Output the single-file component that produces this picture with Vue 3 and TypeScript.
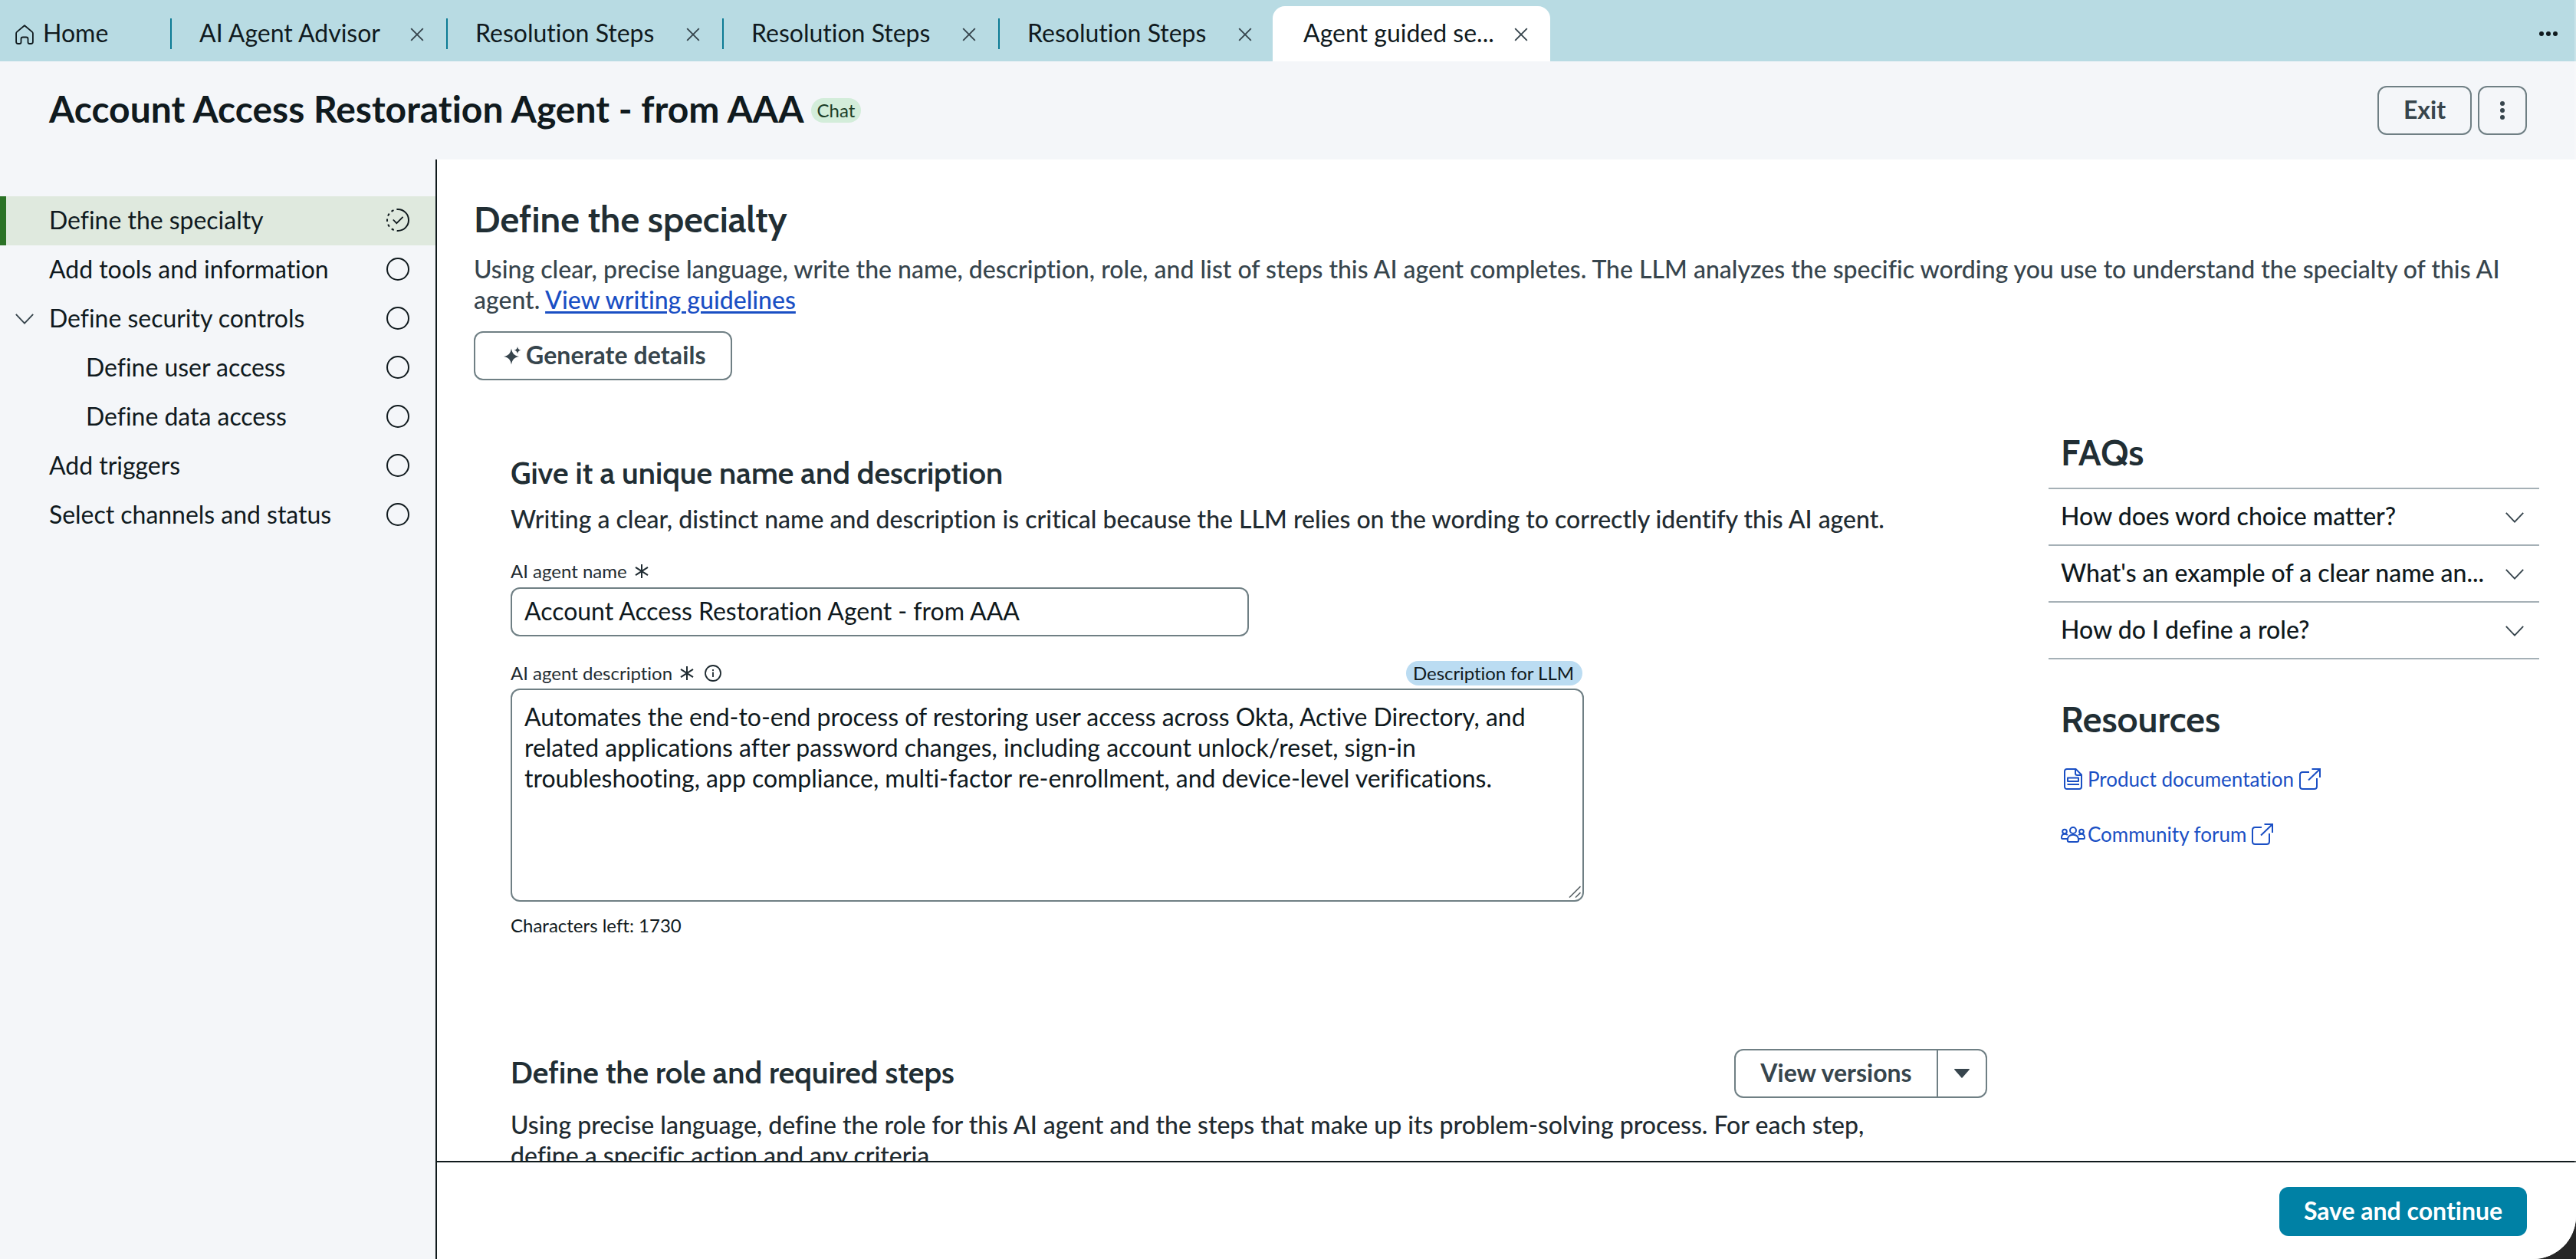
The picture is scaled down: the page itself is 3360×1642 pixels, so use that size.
<script setup lang="ts">
interface Tab { label: string; active?: boolean }
interface Step { label: string; nested?: boolean; expandable?: boolean; active?: boolean }

const tabs: Tab[] = [
  { label: 'AI Agent Advisor' },
  { label: 'Resolution Steps' },
  { label: 'Resolution Steps' },
  { label: 'Resolution Steps' },
  { label: 'Agent guided se...', active: true },
]

const steps: Step[] = [
  { label: 'Define the specialty', active: true },
  { label: 'Add tools and information' },
  { label: 'Define security controls', expandable: true },
  { label: 'Define user access', nested: true },
  { label: 'Define data access', nested: true },
  { label: 'Add triggers' },
  { label: 'Select channels and status' },
]

const faqs: string[] = [
  'How does word choice matter?',
  "What's an example of a clear name an...",
  'How do I define a role?',
]
</script>

<template>
  <div class="backdrop">
    <div class="app">
      <nav class="tabbar">
        <div class="home">
          <svg width="24" height="26" viewBox="0 0 24 26" fill="none" stroke="#101a1e" stroke-width="1.8" stroke-linejoin="round">
            <path d="M12 1.2 22 9.6c.6.5.9 1.2.9 1.9V22.5c0 1.5-1 2.5-2.4 2.5h-2c-1.2 0-2-.9-2-2V18.8c0-1.4-1.2-2.3-2.5-2.3h-4c-1.3 0-2.5.9-2.5 2.3V23c0 1.1-.8 2-2 2h-2C2.1 25 1.1 24 1.1 22.5V11.5c0-.7.3-1.400.9-1.900Z" />
          </svg>
          <span class="txt">Home</span>
        </div>
        <div v-for="(tab, i) in tabs" :key="i" class="tab" :class="{ active: tab.active }">
          <span class="txt">{{ tab.label }}</span>
          <svg class="close" width="18" height="18" viewBox="0 0 18 18" fill="none" stroke="#37454d" stroke-width="1.9">
            <path d="M1.2 1.2 16.8 16.8M16.8 1.2 1.2 16.8" />
          </svg>
        </div>
        <svg class="more" width="24" height="6" viewBox="0 0 24 6" fill="#101a1e">
          <circle cx="3" cy="3" r="3" /><circle cx="12" cy="3" r="3" /><circle cx="21" cy="3" r="3" />
        </svg>
      </nav>

      <header class="header">
        <h1>Account Access Restoration Agent - from AAA</h1>
        <span class="chat">Chat</span>
        <div class="header-actions">
          <button class="btn exit" type="button"><span class="txt">Exit</span></button>
          <button class="btn kebab" type="button" aria-label="More actions">
            <svg width="6" height="24" viewBox="0 0 6 24" fill="#37454d">
              <circle cx="3" cy="3" r="3" /><circle cx="3" cy="12" r="3" /><circle cx="3" cy="21" r="3" />
            </svg>
          </button>
        </div>
      </header>

      <div class="body">
        <aside class="sidebar">
          <div v-for="step in steps" :key="step.label" class="step" :class="{ active: step.active, nested: step.nested }">
            <span class="toggle">
              <svg v-if="step.expandable" width="24" height="14" viewBox="0 0 24 14" fill="none" stroke="#37454d" stroke-width="1.9">
                <path d="M.8.8 12 12.6 23.2.8" />
              </svg>
            </span>
            <span class="txt step-label">{{ step.label }}</span>
            <svg v-if="step.active" class="status" width="30" height="30" viewBox="0 0 30 30" fill="none" stroke="#101a1e" stroke-width="2">
              <path d="M15 1a14 14 0 0 1 0 28" />
              <path d="M15 1a14 14 0 0 0 0 28" stroke-dasharray="3.4 3.93" stroke-dashoffset="1.7" />
              <path d="M8.8 14.5 13.3 19.2 21.6 10.8" stroke-width="1.8" />
            </svg>
            <svg v-else class="status" width="30" height="30" viewBox="0 0 30 30" fill="none" stroke="#101a1e" stroke-width="2">
              <circle cx="15" cy="15" r="14" />
            </svg>
          </div>
        </aside>

        <div class="main">
          <div class="scroll">
            <h2 class="title">Define the specialty</h2>
            <p class="intro">Using clear, precise language, write the name, description, role, and list of steps this AI agent completes. The LLM analyzes the specific wording you use to understand the specialty of this AI agent. <a>View writing guidelines</a></p>
            <button class="btn generate" type="button">
              <svg width="23" height="24" viewBox="0 0 23 24" fill="#37454d">
                <path d="M10 2.5C11.2 9 13.5 11.8 20 13 13.5 14.2 11.2 17 10 23.5 8.8 17 6.5 14.2 0 13 6.5 11.8 8.8 9 10 2.5Z" />
                <path d="M18 0c.6 3 1.6 4.2 4.5 4.8C19.6 5.4 18.6 6.6 18 9.6 17.4 6.6 16.4 5.4 13.5 4.8 16.4 4.2 17.4 3 18 0Z" />
              </svg>
              <span class="txt">Generate details</span>
            </button>

            <div class="columns">
              <section class="form">
                <h3>Give it a unique name and description</h3>
                <p class="lead name-lead">Writing a clear, distinct name and description is critical because the LLM relies on the wording to correctly identify this AI agent.</p>

                <div class="label name-label">
                  <span>AI agent name</span>
                  <svg width="18" height="18" viewBox="0 0 18 18" stroke="#1f2b31" stroke-width="2"><path d="M9 0V18M1 3.8 17 14.2M17 3.8 1 14.2" /></svg>
                </div>
                <div class="field input"><span class="txt">Account Access Restoration Agent - from AAA</span></div>

                <div class="label desc-label">
                  <span>AI agent description</span>
                  <svg width="18" height="18" viewBox="0 0 18 18" stroke="#1f2b31" stroke-width="2"><path d="M9 0V18M1 3.8 17 14.2M17 3.8 1 14.2" /></svg>
                  <svg class="info" width="22" height="22" viewBox="0 0 22 22" fill="none" stroke="#1f2b31" stroke-width="1.8">
                    <circle cx="11" cy="11" r="10" /><path d="M11 9.5V16M11 6V8" />
                  </svg>
                  <span class="badge">Description for LLM</span>
                </div>
                <div class="field textarea">
                  Automates the end-to-end process of restoring user access across Okta, Active Directory, and related applications after password changes, including account unlock/reset, sign-in troubleshooting, app compliance, multi-factor re-enrollment, and device-level verifications.
                  <svg class="grip" width="16" height="16" viewBox="0 0 16 16" stroke="#5c6468" stroke-width="1.6"><path d="M1 15.5 15.5 1M9 15.5 15.5 9" /></svg>
                </div>
                <div class="chars">Characters left: 1730</div>

                <div class="role-head">
                  <h3>Define the role and required steps</h3>
                  <div class="split">
                    <button type="button" class="split-main"><span class="txt">View versions</span></button>
                    <button type="button" class="split-caret" aria-label="Version options">
                      <svg width="20" height="12" viewBox="0 0 20 12" fill="#37454d"><path d="M.6 0H19.4c.5 0 .8.6.4 1L10.6 11.5c-.3.4-.9.4-1.2 0L.2 1C-.2.6.1 0 .6 0Z" /></svg>
                    </button>
                  </div>
                </div>
                <p class="lead role-lead">Using precise language, define the role for this AI agent and the steps that make up its problem-solving process. For each step, define a specific action and any criteria.</p>
              </section>

              <section class="help">
                <h2>FAQs</h2>
                <div class="faqs">
                  <div v-for="faq in faqs" :key="faq" class="faq">
                    <span class="txt">{{ faq }}</span>
                    <svg width="24" height="14" viewBox="0 0 24 14" fill="none" stroke="#37454d" stroke-width="1.9"><path d="M.8.8 12 12.6 23.2.8" /></svg>
                  </div>
                </div>
                <h2 class="resources">Resources</h2>
                <a class="link">
                  <svg class="doc" width="24" height="28" viewBox="0 0 24 28" fill="none" stroke="#1a4fc4" stroke-width="2" stroke-linejoin="round">
                    <path d="M4 1H15.5L23 8.5V24c0 1.8-1.2 3-3 3H4c-1.8 0-3-1.2-3-3V4c0-1.8 1.2-3 3-3Z" />
                    <path d="M15 1V6.5c0 1.5 1 2.5 2.5 2.5H23" />
                    <path d="M5 12.5H19V17H5ZM4.500 21H20" />
                  </svg>
                  <span>Product documentation</span>
                  <svg width="28" height="28" viewBox="0 0 28 28" fill="none" stroke="#1a4fc4" stroke-width="2">
                    <path d="M13 5H4.5C2.3 5 1 6.3 1 8.5V23.5C1 25.7 2.3 27 4.5 27H19.5C21.7 27 23 25.7 23 23.5V13M12 15.500 26.500 1.500M16.500 1H27V12" />
                  </svg>
                </a>
                <a class="link">
                  <svg class="people" width="32" height="21" viewBox="0 0 32 21" fill="none" stroke="#1a4fc4" stroke-width="2">
                    <circle cx="16" cy="5" r="4" /><circle cx="5" cy="6.5" r="2.8" /><circle cx="27" cy="6.5" r="2.8" />
                    <path d="M11 20C9.6 20 8.8 19.3 8.8 18 8.8 13.2 11 10.8 16 10.8S23.2 13.2 23.2 18C23.2 19.3 22.4 20 21 20ZM8.5 16H2.5C1.5 16 1 15.5 1 14.5 1 11.2 2.3 9.8 5 9.8 6.8 9.8 8 10.2 8.9 11.2M23.5 16H29.5C30.5 16 31 15.5 31 14.5 31 11.2 29.7 9.8 27 9.8 25.2 9.8 24 10.2 23.1 11.2" />
                  </svg>
                  <span>Community forum</span>
                  <svg width="28" height="28" viewBox="0 0 28 28" fill="none" stroke="#1a4fc4" stroke-width="2">
                    <path d="M13 5H4.5C2.3 5 1 6.3 1 8.5V23.5C1 25.7 2.3 27 4.5 27H19.5C21.7 27 23 25.7 23 23.5V13M12 15.500 26.500 1.500M16.500 1H27V12" />
                  </svg>
                </a>
              </section>
            </div>
          </div>

          <footer class="footer">
            <button class="save" type="button"><span class="txt">Save and continue</span></button>
          </footer>
        </div>
      </div>
    </div>
  </div>
</template>

<style>
html, body { margin: 0; background: #262626; }
</style>

<style scoped>
.backdrop { width: 3360px; height: 1642px; background: #262626; overflow: hidden; }
.app {
  position: relative; width: 3360px; height: 1642px; display: flex; flex-direction: column; overflow: hidden;
  background: #fff; border-bottom-right-radius: 56px; box-sizing: border-box;
  font-family: Lato, "Open Sans", sans-serif; font-size: 32px; line-height: 40px; color: #101a1e;
  font-variant-ligatures: none;
}
/* thin highlight along the window's right edge */
.app::after { content: ""; position: absolute; top: 0; right: 0; bottom: 0; width: 2px; background: rgba(255, 255, 255, 0.25); }
h1, h2, h3, p { margin: 0; }
button { font: inherit; font-variant-ligatures: none; padding: 0; margin: 0; background: none; cursor: pointer; box-sizing: border-box; }
svg { display: block; flex: none; }
.txt { display: block; line-height: 40px; padding-bottom: 2px; white-space: nowrap; }

.tabbar { flex: none; height: 80px; box-sizing: border-box; padding: 8px 24px 0 0; background: #b8dbe3; display: flex; }
.home { width: 222px; box-sizing: border-box; padding-left: 20px; display: flex; align-items: center; gap: 12px; flex: none; }
.home svg, .close { margin-top: 2px; }
.tab { position: relative; width: 360px; box-sizing: border-box; padding: 0 29px 0 38px; display: flex; align-items: center; justify-content: space-between; flex: none; }
.tab::before { content: ""; position: absolute; left: 0; top: 16px; width: 2px; height: 40px; background: #0b7a94; }
.tab.active { background: #fff; border-radius: 16px 16px 0 0; margin-left: -2px; width: 362px; padding: 0 29px 0 40px; }
.tab.active::before { display: none; }
.more { margin: 33px 0 0 auto; }

.header { flex: none; height: 128px; background: #f4f6f9; display: flex; align-items: center; padding: 0 64px; }
h1 { font-size: 48px; line-height: 58px; font-weight: 700; padding-bottom: 4px; white-space: nowrap; }
.chat { margin-left: 9px; height: 32px; box-sizing: border-box; padding: 0 8px; border-radius: 16px; background: #d3edda; color: #1c3d27; font-size: 24px; line-height: 31px; }
.header-actions { margin-left: auto; display: flex; gap: 8px; }
.btn { height: 64px; border: 2px solid #6f7f84; border-radius: 12px; color: #37454d; font-weight: 700; display: flex; align-items: center; justify-content: center; }
.exit { width: 123px; }
.kebab { width: 64px; }

.body { flex: 1; min-height: 0; display: flex; }
.sidebar { width: 570px; box-sizing: border-box; flex: none; background: #f4f6f9; border-right: 2px solid #101a1c; padding-top: 48px; }
.step { height: 64px; box-sizing: border-box; display: flex; align-items: center; padding: 0 34px 0 20px; letter-spacing: -0.03px; }
.toggle { width: 24px; margin-right: 20px; flex: none; }
.nested .toggle { margin-right: 68px; }
.step-label { flex: 1; }
.status { margin-bottom: 2px; }
.step.active { background: #dfe9de; border-left: 8px solid #2b7226; padding-left: 12px; }

.main { flex: 1; min-width: 0; display: flex; flex-direction: column; background: #fff; }
.scroll { flex: 1; min-height: 0; overflow: hidden; padding: 49px 48px 0; }
h2, h3 { font-family: Cabin, Lato, sans-serif; font-weight: 600; color: #212e34; }
h2 { font-size: 48px; line-height: 58px; }
h3 { font-size: 40px; line-height: 48px; }
.intro { margin-top: 16px; color: #37454d; font-weight: 500; }
.intro a { color: #1a4fc4; text-decoration: underline; text-decoration-thickness: 3px; text-underline-offset: 3px; }
.generate { margin-top: 21px; width: 337px; gap: 6px; justify-content: flex-start; padding-left: 37px; letter-spacing: 0.1px; }

.columns { margin-top: 65px; display: flex; gap: 80px; }
.form { width: 1926px; flex: none; margin-left: 48px; padding-top: 32px; }
.lead { font-weight: 500; color: #1f2b31; }
.name-lead { margin-top: 16px; }
.label { height: 32px; display: flex; align-items: center; font-size: 24px; line-height: 32px; color: #1f2b31; }
.label svg { margin-left: 10px; }
.label .info { margin-left: 14px; }
.name-label { margin-top: 32px; }
.field { box-sizing: border-box; border: 2px solid #6f7f84; border-radius: 12px; color: #0f191d; letter-spacing: -0.03px; }
.input { margin-top: 5px; width: 963px; height: 64px; padding: 0 16px; display: flex; align-items: center; }
.desc-label { margin-top: 32px; width: 1400px; }
.badge { margin: 0 2px 0 auto; height: 32px; padding: 0 9px; border-radius: 16px; background: #bbdcf2; color: #101a1e; line-height: 31px; width: 212px; white-space: nowrap; letter-spacing: -0.05px; }
.textarea { position: relative; margin-top: 4px; width: 1400px; height: 278px; padding: 15px 60px 0 16px; }
.grip { position: absolute; right: 2px; bottom: 3px; }
.chars { margin-top: 15px; font-size: 24px; line-height: 32px; }
.role-head { margin-top: 145px; height: 64px; display: flex; align-items: center; justify-content: space-between; }
.role-head h3 { padding-bottom: 2px; }
.split { display: flex; height: 64px; box-sizing: border-box; border: 2px solid #6f7f84; border-radius: 12px; color: #37454d; }
.split button { border: 0; display: flex; align-items: center; justify-content: center; color: inherit; font-weight: 700; }
.split .split-main { width: 262px; }
.split .split-caret { width: 64px; border-left: 2px solid #6f7f84; }
.role-lead { margin-top: 15px; width: 1850px; }

.help { width: 640px; flex: none; }
.help h2 { padding-left: 16px; }
.faqs { margin-top: 17px; border-top: 2px solid #a5b0b6; }
.faq { height: 74px; box-sizing: border-box; border-bottom: 2px solid #a5b0b6; padding: 0 20px 0 16px; display: flex; align-items: center; justify-content: space-between; color: #0f191d; font-weight: 500; }
.faq svg { margin-top: 2px; }
.help .resources { margin-top: 49px; margin-bottom: 13px; }
.link { height: 72px; padding-left: 16px; display: flex; align-items: center; color: #1a4fc4; font-size: 26px; line-height: 32px; }
.link span { margin: 0 7px 0 3px; }
.link .doc { margin: 0 4px; }

.footer { flex: none; height: 128px; box-sizing: border-box; border-top: 2px solid #101a1c; padding: 32px 64px 0 0; display: flex; justify-content: flex-end; align-items: flex-start; }
.save { width: 323px; height: 64px; border: 0; border-radius: 12px; background: #0081a5; color: #fff; font-weight: 700; display: flex; align-items: center; justify-content: center; }
</style>
